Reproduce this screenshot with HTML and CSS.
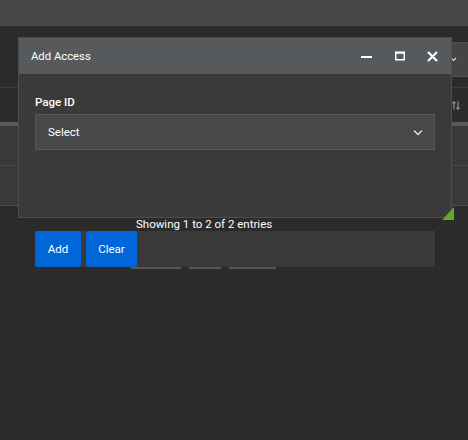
FILE: index.html
```html
<!DOCTYPE html>
<html>
<head>
<meta charset="utf-8">
<link rel="stylesheet" href="styles.css">
</head>
<body>
<div class="page">
  <div class="topbar"></div>
  <div class="filters">
    <div class="filter-select">
      <svg class="chev" width="7" height="5" viewBox="0 0 7 5"><path d="M1 1 L3.5 3.5 L6 1" fill="none" stroke="#e0e0e0" stroke-width="1.1"/></svg>
    </div>
  </div>
  <div class="thead">
    <svg class="sort" width="8" height="9" viewBox="0 0 8 9"><path d="M2 8.5 V0.8 M0.5 2.3 L2 0.8 L3.5 2.3 M6 0.5 V8.2 M4.5 6.7 L6 8.2 L7.5 6.7" fill="none" stroke="#9a9a9a" stroke-width="1.1"/></svg>
  </div>
  <div class="thead-bar"></div>
  <div class="row"></div>
  <div class="row"></div>
  <div class="info">Showing 1 to 2 of 2 entries</div>
  <div class="panel">
    <button class="btn btn-add">Add</button>
    <button class="btn btn-clear">Clear</button>
  </div>
  <div class="pager">
    <span class="pg pg1"></span>
    <span class="pg pg2"></span>
    <span class="pg pg3"></span>
  </div>
</div>

<div class="dialog">
  <div class="dlg-head">
    <span class="dlg-title">Add Access</span>
    <div class="dlg-tools">
      <svg class="ic-min" width="11" height="11" viewBox="0 0 11 11"><path d="M0 6 H11" stroke="#ffffff" stroke-width="2"/></svg>
      <svg class="ic-max" width="10" height="10" viewBox="0 0 10 10"><rect x="0.75" y="1.25" width="8.5" height="7.5" fill="none" stroke="#ffffff" stroke-width="1.5"/><path d="M0.5 2 H9.5" stroke="#ffffff" stroke-width="1.5"/></svg>
      <svg class="ic-close" width="11" height="11" viewBox="0 0 11 11"><path d="M1 1 L10 10 M10 1 L1 10" stroke="#ffffff" stroke-width="2.2"/></svg>
    </div>
  </div>
  <div class="dlg-body">
    <div class="label">Page ID</div>
    <div class="select">
      <span>Select</span>
      <svg width="10" height="7" viewBox="0 0 10 7"><path d="M1 1.5 L5 5.5 L9 1.5" fill="none" stroke="#e8e8e8" stroke-width="1.3"/></svg>
    </div>
  </div>
  <div class="grip"></div>
</div>
</body>
</html>
```

FILE: styles.css
```css
* { box-sizing: border-box; }
html, body { margin: 0; padding: 0; }
body {
  background: #2b2b2b;
  font-family: Roboto, "Liberation Sans", Arial, sans-serif;
  color: #ffffff;
  width: 468px;
  height: 440px;
  overflow: hidden;
  position: relative;
}
.page { width: 468px; }
.topbar { height: 26px; background: #474747; }
.filters {
  height: 62px;
  display: flex;
  justify-content: flex-end;
  padding-top: 16px;
  border-bottom: 1px solid #3c3c3c;
  overflow: hidden;
}
.filter-select {
  width: 80px;
  height: 35px;
  margin-right: -12px;
  background: #454545;
  border: 1px solid #505050;
  display: flex;
  align-items: center;
  justify-content: flex-end;
  padding-right: 22px;
}
.thead {
  height: 34px;
  display: flex;
  justify-content: flex-end;
  align-items: center;
  padding-right: 8px;
  background: #2c2c2c;
}
.thead-bar { height: 4px; background: #595959; }
.row {
  height: 40px;
  background: #393939;
  border-bottom: 1px solid #4a4a4a;
}
.info {
  margin-top: 11px;
  padding-left: 136px;
  font-size: 11.5px;
  line-height: 14px;
  height: 14px;
}
.panel {
  margin: 0 33px 0 35px;
  height: 36px;
  background: #3a3a3a;
  display: flex;
  gap: 5px;
}
.btn {
  height: 36px;
  border: 0;
  border-radius: 3px;
  background: #0066d9;
  color: #ffffff;
  font-family: Roboto, "Liberation Sans", Arial, sans-serif;
  font-size: 11.5px;
  padding: 0;
  text-align: center;
}
.btn-add { width: 46px; }
.btn-clear { width: 51px; }
.pager { display: flex; padding-left: 131px; gap: 8px; height: 3px; }
.pg { display: block; height: 2px; background: #555555; }
.pg1 { width: 50px; }
.pg2 { width: 32px; }
.pg3 { width: 47px; }

.dialog {
  position: absolute;
  left: 18px;
  top: 37px;
  width: 434px;
  height: 181px;
  background: #3a3a3a;
  border: 1px solid #4d4d4d;
}
.dlg-head {
  height: 36px;
  background: #575a5d;
  display: flex;
  align-items: center;
  justify-content: space-between;
  padding: 0 13px 0 12px;
}
.dlg-title { font-size: 11.3px; }
.dlg-tools { display: flex; align-items: center; }
.ic-max { margin-left: 23px; }
.ic-close { margin-left: 22px; }
.dlg-body { padding: 21px 16px 0 16px; }
.label { font-size: 11.5px; line-height: 14px; font-weight: 500; margin-bottom: 5px; }
.select {
  height: 36px;
  background: #484848;
  border: 1px solid #585858;
  display: flex;
  align-items: center;
  justify-content: space-between;
  padding: 0 11px 0 12px;
  font-size: 11.5px;
}
.grip {
  position: absolute;
  right: -3px;
  bottom: -3px;
  width: 0;
  height: 0;
  border-left: 12px solid transparent;
  border-bottom: 13px solid #66aa22;
}
```
